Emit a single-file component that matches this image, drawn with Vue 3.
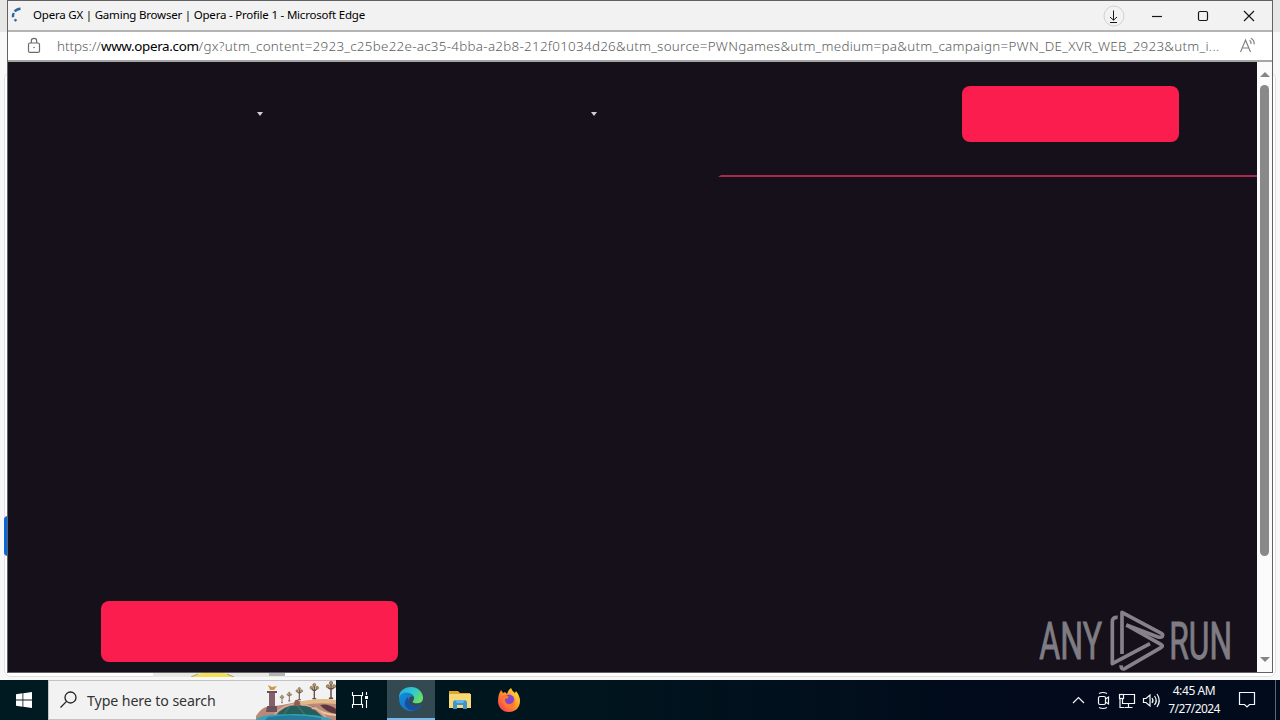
<script setup>
const carets = ['products', 'features']
const lamps = [
  { x: 42, y: 15, s: 0.48 },
  { x: 49.3, y: 12, s: 0.56 },
  { x: 59.3, y: 7.5, s: 0.76 },
  { x: 74.3, y: 3.5, s: 0.95 },
  { x: 91, y: 1.5, s: 1.05 },
]
</script>

<template>
  <div class="desktop">
    <div class="behind">
      <div class="behind-top"></div>
      <div class="behind-frame"></div>
      <div class="blue-tab"></div>
      <svg class="behind-strip" width="140" height="4" viewBox="0 0 140 4">
        <rect width="132" height="4" fill="#e9e8e2" />
        <path d="M38 4Q46 0 52 0H68Q74 0 81 4Z" fill="#f2df55" />
        <path d="M38 4L45 1M74 1L81 4" stroke="#aaa46f" />
        <rect x="116" width="16" height="3" fill="#b4b4b5" />
      </svg>
    </div>

    <div class="window">
      <header class="titlebar">
        <svg class="spinner" width="12" height="16" viewBox="0 0 12 16" fill="none" stroke="#2a659d" stroke-width="2.4">
          <path d="M9.5 1.8Q5.5 2 3.7 4.5M2.8 6Q1.6 8 2 10.2" />
          <circle cx="4.5" cy="13.2" r=".9" fill="#2a659d" stroke-width="1" />
        </svg>
        <span class="title">Opera GX | Gaming Browser | Opera - Profile 1 - Microsoft Edge</span>
        <svg class="controls" width="168" height="28" viewBox="0 0 168 28" fill="none" stroke="#171717">
          <circle cx="14" cy="14" r="10" stroke="#d2d2d2" />
          <path d="M13.5 8.5V18M10 15L13.5 18.2L17 15M10 20.5H17" stroke-width="1" />
          <path d="M52 14.5H62" stroke-width="1.2" />
          <rect x="98.5" y="9.5" width="9" height="9" rx="1.5" stroke-width="1.2" />
          <path d="M144 9L154 19M154 9L144 19" stroke-width="1.2" />
        </svg>
      </header>

      <div class="address">
        <svg class="lock" width="14" height="17" viewBox="0 0 14 17" fill="none" stroke="#6b6b6b" stroke-width="1.2">
          <rect x="1.5" y="6" width="11" height="9.4" rx="1.5" />
          <path d="M4.3 6V4A2.7 2.7 0 0 1 9.7 4V6" />
          <circle cx="7" cy="10.5" r=".7" fill="#555" stroke="none" />
        </svg>
        <div class="url"><span class="scheme">https://</span><span class="host">www.opera.com</span><span class="path">/gx?utm_content=2923_c25be22e-ac35-4bba-a2b8-212f01034d26&amp;utm_source=PWNgames&amp;utm_medium=pa&amp;utm_campaign=PWN_DE_XVR_WEB_2923&amp;utm_i...</span></div>
        <svg class="read" width="18" height="18" viewBox="0 0 18 18" fill="none" stroke="#808080" stroke-width="1.2">
          <path d="M.5 16L5.5 4L10.5 16M2.5 12H8.5" />
          <path d="M9.5 4.2Q11.5 5.5 11 8M10.8 2.3Q14.8 4.5 14 8.3" />
        </svg>
      </div>

      <div class="content">
        <main class="page">
          <nav>
            <i v-for="c in carets" :key="c" class="caret"></i>
            <div class="button nav-button"></div>
          </nav>
          <div class="accent"></div>
          <div class="button hero-button"></div>
        </main>
        <aside class="scrollbar">
          <i class="arrow up"></i>
          <div class="thumb"></div>
          <i class="arrow down"></i>
        </aside>
      </div>
    </div>

    <svg class="watermark" width="204" height="68" viewBox="45 30 612 204">
      <g fill="#7f7c84" stroke="#7f7c84" stroke-width="3" font-family="Roboto, sans-serif" font-size="153">
        <text x="58" y="191" textLength="188" lengthAdjust="spacingAndGlyphs">ANY</text>
        <text x="448" y="191" textLength="188" lengthAdjust="spacingAndGlyphs">RUN</text>
      </g>
      <g fill="none" stroke="#85828a" stroke-width="11" stroke-linejoin="round">
        <path d="M293 67Q277 66 277 80V206L390 146" />
        <path d="M306 177V52L424 115Q430 119 427 124Q423 129 412 125L319 90" />
        <path d="M319 90L424 149Q430 153 424 157L314 221Q303 225 303 211" />
      </g>
    </svg>

    <footer class="taskbar">
      <div class="start">
        <svg width="16" height="16" viewBox="0 0 16 16" fill="#fff">
          <path d="M0 2.2L6.5 1.3V7.5H0ZM7.3 1.2L16 0V7.5H7.3ZM0 8.4H6.5V14.7L0 13.8ZM7.3 8.4H16V16L7.3 14.8Z" />
        </svg>
      </div>
      <div class="search">
        <svg class="magnifier" width="18" height="18" viewBox="0 0 18 18" fill="none" stroke="#222" stroke-width="1.3">
          <circle cx="10.5" cy="6.5" r="5.5" /><path d="M6.5 10.4L.5 16.5" />
        </svg>
        <span class="search-label">Type here to search</span>
        <svg class="bridge" width="80" height="39" viewBox="16 1 80 39">
          <path d="M16 36Q22 27 27 27L42 25L62 21H96V40H16Z" fill="#b98a77" />
          <path d="M52 23Q80 17 96 20V24Q78 22 62 25Z" fill="#e3b987" />
          <path d="M65 26Q74 24 80 32L73 30ZM80 25Q88 23 96 29V34Q86 32 80 25Z" fill="#5b3540" />
          <path d="M62 25Q68 32 75 28Q82 34 96 35" fill="none" stroke="#ecc9a0" stroke-width="2" />
          <path d="M35 37Q43 25 57 25Q72 25 84 38Z" fill="#245f5a" />
          <path d="M34 35Q43 24 57 24Q73 24 86 37" fill="none" stroke="#d6ad9b" stroke-width="1.5" />
          <path d="M44 34L50 26M57 25L65 35" fill="none" stroke="#416f68" stroke-width="1.5" />
          <path d="M16 40Q18 34 54 34Q80 34 94 40Z" fill="#36a1bd" />
          <path d="M28 37Q54 33 81 38V40H25Z" fill="#257b9b" />
          <path d="M29 13H35V29H29Z" fill="#84616a" /><path d="M27 11H37V13H27ZM27 26H37V32H26Z" fill="#6c505b" />
          <path d="M28 5L32 7L37 6L34 10H30Z" fill="#d19848" />
          <path d="M54 25Q54 19 58 20Q62 23 59 26H54Z" fill="#925d54" />
          <g v-for="l in lamps" :key="l.x" :transform="`translate(${l.x} ${l.y}) scale(${l.s})`">
            <path d="M0 1V16M-3 5Q0 10 3 5M-2 16H2" fill="none" stroke="#634d43" stroke-width="1.4" />
            <g fill="#b49a59" stroke="#695844" stroke-width=".6"><circle cx="0" cy="1.5" r="1.6" /><circle cx="-3" cy="4.5" r="1.5" /><circle cx="3" cy="4.5" r="1.5" /></g>
          </g>
        </svg>
      </div>
      <div class="apps">
        <div class="app">
          <svg width="18" height="18" viewBox="0 0 18 18" fill="none" stroke="#fff" stroke-width="1.1">
            <path d="M1.5 1V4.5H11.5V1M1.5 17V13.5H11.5V17M2.5 4.5V13.5M10.5 4.5V13.5M15.5 1V4M15.5 9V17" />
            <rect x="14" y="5" width="3" height="3" fill="#fff" stroke="none" />
          </svg>
        </div>
        <div class="app active">
          <svg width="26" height="26" viewBox="0 0 26 26">
            <defs>
              <linearGradient id="edgeTop" x1="0" y1="0" x2="1" y2=".6"><stop stop-color="#27a8df" /><stop offset=".55" stop-color="#2fc9cb" /><stop offset="1" stop-color="#68df65" /></linearGradient>
              <linearGradient id="edgeBlue" x1="0" y1="0" x2="1" y2="1"><stop stop-color="#158ad9" /><stop offset="1" stop-color="#1269bd" /></linearGradient>
            </defs>
            <path d="M1 12C1 5 6 1 13 1C21 1 25 7 25 12C25 17 20 18 16 17C13 16 16 15 16 12C16 8 10 5 1 12Z" fill="url(#edgeTop)" />
            <path d="M1 12C3 5 13 5 16 11C9 8 8 20 18 21Q21 21 24 18C21 24 16 25 12 25C5 24 1 19 1 12Z" fill="url(#edgeBlue)" />
            <path d="M10 11C3 17 9 26 17 24Q21 23 24 18C17 23 10 19 10 11Z" fill="#174f9e" />
          </svg>
        </div>
        <div class="app">
          <svg width="24" height="22" viewBox="0 0 24 22">
            <path d="M1 2H10L12 4H22V7H1Z" fill="#e4a52d" /><path d="M1 5H23V19H1Z" fill="#f8d775" />
            <path d="M5 20V14Q5 11 8 11H16Q19 11 19 14V20H15V16H9V20Z" fill="#3f94cc" /><path d="M7 11H17L15 14H9Z" fill="#62b8e6" />
          </svg>
        </div>
        <div class="app">
          <svg width="24" height="26" viewBox="0 0 24 26">
            <defs><linearGradient id="fire" x1="1" y1="0" x2="0" y2="1"><stop stop-color="#fff044" /><stop offset=".45" stop-color="#ff9a26" /><stop offset="1" stop-color="#f52b5b" /></linearGradient></defs>
            <path d="M2 7L4 3L6 6L8 5Q9 6 10 7Q11 3 14 1Q15 4 18 6L19 4Q23 9 23 14C23 21 18 25 12 25C5 25 1 20 1 14Q1 10 2 7Z" fill="url(#fire)" />
            <circle cx="12" cy="13" r="5.4" fill="#8245ce" /><path d="M5 9Q9 7 12 10Q11 12 8 12Q8 17 12 17Q16 17 17 13Q19 22 11 21Q5 20 5 9Z" fill="#ff7832" />
          </svg>
        </div>
      </div>
      <svg class="tray" width="98" height="24" viewBox="0 0 98 24" fill="none" stroke="#f4f7fa" stroke-width="1.2">
        <path d="M3 15L8.5 9.5L14 15" />
        <path d="M29 5.5Q33 3.5 37 5.5M29 19.5Q33 21.5 37 19.5" />
        <rect x="28.5" y="8.5" width="7" height="8" rx="1.5" /><path d="M35.5 11L38.5 9V16L35.5 14" />
        <path d="M53 6.5H64.5V15.5H52.5V11M58.5 16V19M54.5 19.5H62.5M50 11V19.5H54" /><rect x="49.5" y="6.5" width="4" height="4" />
        <path d="M73.5 10.5H76L80 7V18L76 14.5H73.5ZM82 10Q84 12.5 82 15M84.5 8Q88 12.5 84.5 17M87 6Q91.5 12.5 87 19" />
      </svg>
      <div class="clock"><span>4:45 AM</span><span class="date">7/27/2024</span></div>
      <svg class="notice" width="18" height="18" viewBox="0 0 18 18" fill="none" stroke="#f4f7fa" stroke-width="1.2">
        <path d="M1.5 1.5H16.5V13.5H11.5L9 16L6.5 13.5H1.5Z" />
      </svg>
      <div class="show-desktop"></div>
    </footer>
  </div>
</template>

<style>
html, body { margin: 0; overflow: hidden; }
</style>

<style scoped>
* { box-sizing: border-box; }
svg { display: block; flex: none; }
.desktop { position: relative; display: flex; flex-direction: column; width: 1280px; height: 720px; overflow: hidden; background: #f8f8f8; font-family: "Noto Sans", sans-serif; }
.behind { position: absolute; inset: 0; }
.behind-top { height: 32px; background: #e7e7e7; }
.behind-frame { position: absolute; left: 4px; top: 72px; width: 1272px; height: 605px; border: 1px solid #e0e0e0; border-radius: 7px; background: #fff; }
.blue-tab { position: absolute; left: 4px; top: 516px; width: 5px; height: 40px; background: #0668e1; border-radius: 4px 0 0 4px; }
.behind-strip { position: absolute; left: 153px; top: 673px; }
.window { position: relative; display: flex; flex-direction: column; width: 1266px; height: 673px; margin-left: 7px; border: 1px solid #626262; flex: none; }
.titlebar { display: flex; align-items: center; height: 29px; background: #f2f2f2; padding-left: 3px; flex: none; }
.spinner { margin-top: -2px; }
.title { margin: -2px 0 0 10px; font-size: 11.5px; letter-spacing: -.205px; color: #000; white-space: nowrap; }
.controls { margin-left: auto; margin-right: 4px; }
.address { display: flex; align-items: center; height: 32px; border-top: 2px solid #b4b4b4; border-bottom: 2px solid #a5a5a5; background: #fff; padding-left: 19px; flex: none; }
.lock { margin-top: -2px; }
.url { width: 1164px; margin-left: 16px; font-size: 13.4px; white-space: nowrap; color: #5c5c5c; font-weight: 300; }
.host { color: #000; font-weight: 400; letter-spacing: -.33px; }
.path { letter-spacing: .278px; }
.read { margin: -2px 0 0 19px; }
.content { display: flex; flex: 1; min-height: 0; }
.page { display: flex; flex-direction: column; width: 1249px; background: #15101a; }
nav { display: flex; align-items: center; height: 56px; margin-top: 24px; padding-left: 249px; }
.caret { border: 3px solid transparent; border-top: 4px solid #d1cfd2; border-bottom: 0; margin-right: 328px; }
.button { background: #fb1d4d; border-radius: 8px; }
.nav-button { width: 217px; height: 56px; margin-left: 37px; }
.accent { width: 539px; height: 2px; margin: 33px 0 0 auto; background: #a92a4c; clip-path: polygon(3px 0, 100% 0, 100% 100%, 0 100%); }
.hero-button { width: 297px; height: 61px; margin: auto 0 10px 93px; }
.scrollbar { display: flex; flex-direction: column; align-items: center; width: 15px; background: #fbfbfb; }
.arrow { border: 5px solid transparent; }
.up { border-top: 0; border-bottom: 5px solid #858585; margin-top: 10px; }
.down { border-bottom: 0; border-top: 5px solid #858585; margin: auto 0 10px; }
.thumb { width: 9px; height: 471px; margin-top: 8px; border-radius: 5px; background: #898989; }
.watermark { position: absolute; left: 1035px; top: 605px; overflow: visible; }
.taskbar { position: relative; display: flex; align-items: center; height: 40px; margin-top: 7px; color: #f7f9fb; background: linear-gradient(90deg, #001a22 0, #00151e 45%, #020a1b 80%, #020b1c); }
.start { display: flex; align-items: center; justify-content: center; width: 48px; height: 40px; }
.search { display: flex; align-items: center; width: 288px; height: 40px; border: 1px solid #c3c3c3; border-right: 0; background: #f2f2f2; color: #343434; }
.magnifier { margin-left: 11px; }
.search-label { width: 149px; margin-left: 9px; font-size: 14.2px; letter-spacing: -.1px; white-space: nowrap; }
.bridge { margin-left: auto; }
.apps { display: flex; gap: 1px; margin-left: 2px; }
.app { display: flex; align-items: center; justify-content: center; width: 48px; height: 40px; }
.app:first-child { padding-right: 4px; }
.active { background: #344a53; border-bottom: 2px solid #76b9ed; }
.tray { margin-left: auto; }
.clock { display: flex; flex-direction: column; align-items: center; width: 60px; margin: 0 1px 0 -4px; font-size: 12px; line-height: 18px; letter-spacing: -.4px; white-space: nowrap; }
.date { letter-spacing: -.62px; }
.notice { margin-left: 13px; }
.show-desktop { width: 20px; height: 40px; border-right: 1px solid #5f6876; margin-right: 4px; }
</style>
